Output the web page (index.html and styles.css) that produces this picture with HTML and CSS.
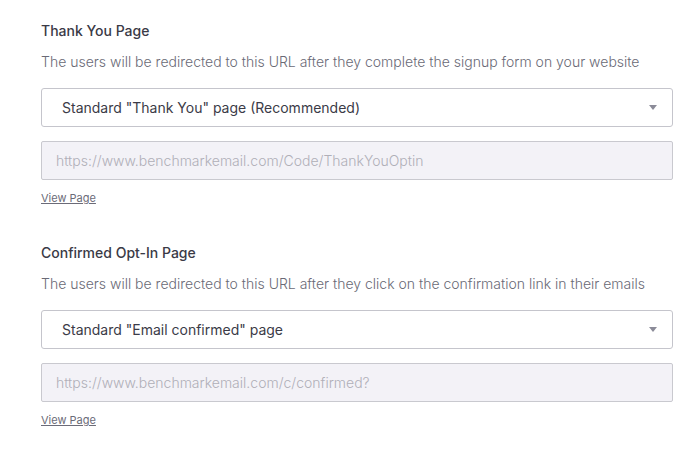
FILE: index.html
```html
<!DOCTYPE html>
<html lang="en">
<head>
<meta charset="utf-8">
<title>Thank You Page Settings</title>
<link rel="stylesheet" href="styles.css">
</head>
<body>
<main class="page">
  <section class="group">
    <h2 class="group-title">Thank You Page</h2>
    <p class="group-desc">The users will be redirected to this URL after they complete the signup form on your website</p>
    <div class="select">
      <span class="select-value">Standard "Thank You" page (Recommended)</span>
      <span class="select-arrow"></span>
    </div>
    <div class="url-field">https://www.benchmarkemail.com/Code/ThankYouOptin</div>
    <a class="view-link" href="#">View Page</a>
  </section>
  <section class="group">
    <h2 class="group-title">Confirmed Opt-In Page</h2>
    <p class="group-desc">The users will be redirected to this URL after they click on the confirmation link in their emails</p>
    <div class="select">
      <span class="select-value">Standard "Email confirmed" page</span>
      <span class="select-arrow"></span>
    </div>
    <div class="url-field">https://www.benchmarkemail.com/c/confirmed?</div>
    <a class="view-link" href="#">View Page</a>
  </section>
</main>
</body>
</html>
```

FILE: styles.css
```css
* { box-sizing: border-box; }
html, body { margin: 0; background: #ffffff; }
body {
  font-family: Inter, "Noto Sans", "Liberation Sans", sans-serif;
  color: #3b3b47;
}
.page {
  width: 632px;
  margin-left: 41px;
  padding-top: 21px;
  display: flex;
  flex-direction: column;
  gap: 38px;
}
.group {
  display: flex;
  flex-direction: column;
}
.group-title {
  margin: 0;
  font-size: 14px;
  line-height: 20px;
  font-weight: 500;
  color: #3a3a46;
}
.group-desc {
  margin: 11px 0 0;
  font-size: 14px;
  line-height: 20px;
  font-weight: 300;
  color: #6a6a76;
  white-space: nowrap;
}
.select {
  margin-top: 16px;
  height: 39px;
  border: 1px solid #c5c5cc;
  border-radius: 3px;
  background: #fff;
  display: flex;
  align-items: center;
  justify-content: space-between;
  padding: 0 15px 0 20px;
}
.select-value {
  font-size: 14px;
  font-weight: 400;
  color: #3b3b47;
}
.select-arrow {
  width: 0;
  height: 0;
  border-left: 4px solid transparent;
  border-right: 4px solid transparent;
  border-top: 5px solid #8b8b98;
}
.url-field {
  margin-top: 14px;
  height: 39px;
  border: 1px solid #c9c9cf;
  border-radius: 2px;
  background: #f3f2f7;
  display: flex;
  align-items: center;
  padding: 0 14px;
  font-size: 14px;
  font-weight: 300;
  color: #b0afb8;
}
.view-link {
  align-self: flex-start;
  margin-top: 11px;
  font-size: 11px;
  line-height: 14px;
  color: #6b6b78;
  text-decoration: underline;
}
```
